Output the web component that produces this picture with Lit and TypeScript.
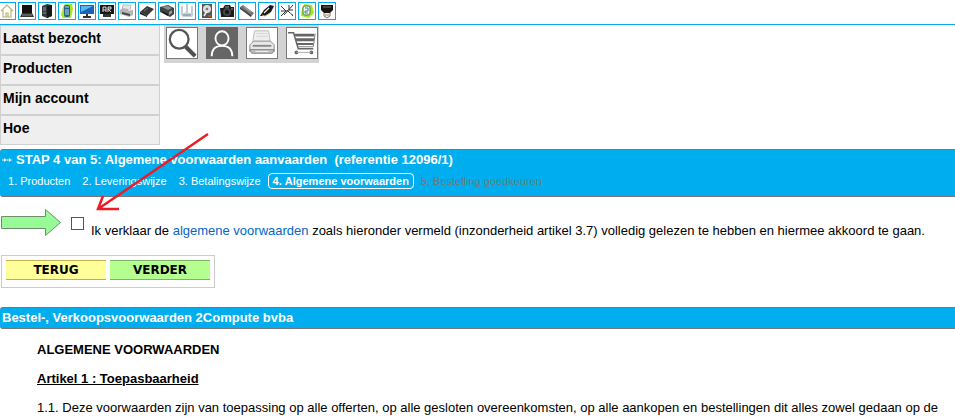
import { LitElement, html, svg, css } from "lit";
import { customElement, state } from "lit/decorators.js";

const categories = [
  { name: "Start", art: svg`<path d="M2 8 8 2l6 6M4 7v7h8V7M7 14v-4h2v4" fill="none" stroke="#b5b673" stroke-width="1.2"/>` },
  { name: "Laptops", art: svg`<path d="M3 2h10v8H3z" fill="#111"/><path d="M3 10h10l2 4H1z" fill="#333"/><path d="M3 12h10" stroke="#888"/>` },
  { name: "Computers", art: svg`<path d="m3 3 5-2 5 1v11l-5 2-5-2z" fill="#34393d"/><path d="m8 3 5-1v11l-5 2z" fill="#151719"/><path d="M4 5h3M4 7h3M4 10h3" stroke="#8d969c"/>` },
  { name: "Telefonie", art: svg`<path d="M6 1h7l1 5-2 9H4L2 12 4 4z" fill="#a6e52a"/><rect x="5" y="2" width="6" height="12" rx="2" fill="#27618b"/><path d="M6 4h4M6 7h4M6 9h4M6 11h4" stroke="#b9ddea"/>` },
  { name: "Monitoren", art: svg`<path d="M1 2h14v9H1z" fill="#1b64b5"/><path d="M2 3h12L2 9z" fill="#57b5f1"/><path d="M7 11h2v2h3v2H4v-2h3z" fill="#333"/>` },
  { name: "Software", art: svg`<path d="M1 2h14v9H1z" fill="#161616"/><path d="M4 9V4h3v5M4 7h3M9 9V4h3v2H9l3 3" stroke="#ddd" fill="none"/><path d="M4 11h8v3H4z" fill="#333"/>` },
  { name: "Printers", art: svg`<path d="M4 2h8l-1 5H3z" fill="#e6e6e6" stroke="#bbb"/><path d="m1 7 3-2 10 2v5l-4 2-9-3z" fill="#b5b5b5"/><path d="m3 9 8 2v2l-8-2z" fill="#444"/><path d="M9 7h4" stroke="#f6f6f6"/>` },
  { name: "Schijven", art: svg`<path d="m1 9 7-6 7 3-7 7z" fill="#383838"/><path d="m1 9 7 4v1L1 11z" fill="#111"/><path d="m5 8 4-3" stroke="#777"/>` },
  { name: "Netwerk", art: svg`<path d="m1 4 8-2 6 3v6l-4 3-10-5z" fill="#3f4442"/><path d="m3 4 6-1 4 2-4 2z" fill="#8b9390"/><path d="m3 8 6 3v2L3 9z" fill="#151515"/><path d="m10 9 3-2v3l-3 2z" fill="#8aa892"/>` },
  { name: "Routers", art: svg`<path d="M3 11V3M8 10V1M13 11V3" stroke="#9ab" stroke-width="1.2"/><path d="m1 11 6-2 8 2-2 3H4z" fill="#c5d2da"/><path d="M4 12h8" stroke="#6e8490"/>` },
  { name: "Harde schijven", art: svg`<path d="M3 1h10v14H3z" fill="#555"/><circle cx="8" cy="6" r="4" fill="#ddd"/><circle cx="8" cy="6" r="1.3" fill="#777"/><path d="m5 13 3-5" stroke="#eee" stroke-width="1.5"/><path d="M9 12h3v2H9z" fill="#a5503b"/>` },
  { name: "Camera's", art: svg`<path d="M1 5h3l2-3h5l1 2h3v10H2z" fill="#1b1b1b"/><circle cx="8" cy="9" r="4" fill="#444"/><circle cx="8" cy="9" r="2" fill="#111"/><path d="M6 4h4M12 6h2" stroke="#999"/>` },
  { name: "Geheugen", art: svg`<path d="m1 4 3-2 11 8-3 4z" fill="#777"/><path d="m1 4 11 8v2L1 6z" fill="#444"/><path d="m5 4 7 5" stroke="#aaa"/>` },
  { name: "Accessoires", art: svg`<path d="m1 13 4-6 6-5 4 1-3 6-6 4z" fill="#171717"/><path d="m5 10 5-5" stroke="#eee" stroke-width="1.3"/><path d="m3 12 3 1 5-3" stroke="#d1a43e" fill="none"/>` },
  { name: "Kabels", art: svg`<path d="m2 3 5 5-5 5M14 2 5 12M8 7l6 6M10 2v5h4M2 8h6" stroke="#333" fill="none"/><path d="m11 10 3 2" stroke="#888"/>` },
  { name: "Beveiliging", art: svg`<path d="m5 1 8 1 2 8-5 5-8-2 1-8z" fill="#a4e52f"/><rect x="4" y="3" width="7" height="9" rx="2" fill="#eef5e9" stroke="#547d4b"/><path d="M6 5h3v3H6v2h3" stroke="#4184a1" fill="none"/>` },
  { name: "Stekkers", art: svg`<path d="M2 2h12v5l-3 3H5L2 7z" fill="#151515"/><path d="M4 4h8" stroke="#777"/><path d="M5 10v3l3 2 3-2v-3" fill="#eee" stroke="#777"/><path d="M6 12h4" stroke="#c48045"/>` },
];

const tools = [
  { name: "Zoeken", kind: "", art: svg`<circle cx="13" cy="12" r="10" fill="#fff" stroke="#555" stroke-width="2.4"/><path d="m20 20 10 10" stroke="#505050" stroke-width="4.5"/>` },
  { name: "Mijn profiel", kind: "dark", art: svg`<ellipse cx="16" cy="11" rx="7" ry="7.5" fill="none" stroke="#fff" stroke-width="2"/><path d="M5 30c0-7 4-11 11-11s11 4 11 11" fill="none" stroke="#fff" stroke-width="2"/>` },
  { name: "Afdrukken", kind: "", art: svg`<path d="M8 3h15l2 13H6z" fill="#eee" stroke="#bbb"/><path d="M10 6h12M10 9h12" stroke="#d5d5d5"/><path d="M7 14h18l4 4v7H3v-7z" fill="#e7e7e7" stroke="#888"/><path d="M6 18h20v2H6z" fill="#888"/><path d="M3 23h26l-2 4H5z" fill="#bbb" stroke="#888"/><path d="M9 25h14" stroke="#f4f4f4"/>` },
  { name: "Winkelwagen", kind: "", art: svg`<path d="M1 5h6l5 17h16" fill="none" stroke="#666" stroke-width="1.6"/><path d="M8 6h21v3H9zM9 11h20v3H10zM10 16h18v2H11z" fill="#666"/><path d="M12 20h16l2-14" fill="none" stroke="#777"/><circle cx="10" cy="26" r="2" fill="#666"/><circle cx="26" cy="26" r="2" fill="#666"/><path d="M10 26h16" stroke="#aaa"/>` },
];

const menu = ["Laatst bezocht", "Producten", "Mijn account", "Hoe"];

const steps = ["Producten", "Leveringswijze", "Betalingswijze", "Algemene voorwaarden", "Bestelling goedkeuren"];

@customElement("app-root")
export class AppRoot extends LitElement {
  @state() private accepted = false;

  static styles = css`
    :host {
      display: block;
      position: relative;
      overflow: hidden;
      background: #fff;
      color: #000;
      font: 13px/18px "Liberation Sans", Arial, sans-serif;
    }
    * { box-sizing: border-box; }
    a { text-decoration: none; }
    svg { display: block; }
    .categories {
      display: flex;
      gap: 2px;
      height: 25px;
      padding-top: 2px;
      margin-left: -2px;
      border-bottom: 1px solid #00aeef;
    }
    .category {
      width: 18px;
      height: 18px;
      border: 1px solid #00aeef;
    }
    .category svg { width: 16px; height: 16px; }
    .top { display: flex; align-items: flex-start; gap: 4px; }
    .menu { width: 160px; }
    .menu a {
      display: block;
      height: 30px;
      padding: 2px;
      border: 1px solid #d0d0d0;
      background: #efefef;
      color: #000;
      font-size: 14px;
      font-weight: bold;
      line-height: 20px;
    }
    .tools {
      display: flex;
      gap: 8px;
      padding: 2px 1px 4px 2px;
      background: #d3d3d3;
    }
    .tool {
      width: 32px;
      height: 32px;
      padding: 0;
      border: 1px solid #777;
      background: #fff;
    }
    .tool svg { width: 30px; height: 30px; }
    .dark { background: #666; border-color: #666; }
    .banner {
      border: solid #777;
      border-width: 1px 0;
      border-radius: 3px 0 0 3px;
      background: #00aeef;
      color: #fff;
    }
    .progress { height: 48px; margin-top: 4px; }
    h1, h2 { margin: 0; font-size: 13px; line-height: 20px; font-weight: bold; white-space: pre; }
    h1 { display: flex; gap: 4px; padding-left: 2px; }
    h2 { padding-left: 2px; }
    .marks { width: 10px; height: 20px; }
    .steps {
      display: flex;
      gap: 2px;
      margin: 3px 0 0;
      padding: 0 0 0 3px;
      list-style: none;
      font-size: 11px;
      line-height: 14px;
      white-space: nowrap;
    }
    .steps li { display: flex; gap: 3px; padding: 0 4px; border: 1px solid transparent; }
    .steps .current { border-color: #fff; border-radius: 4px; font-weight: bold; }
    .steps .later { color: #777; }
    .accept { display: flex; align-items: flex-start; margin-top: 10px; height: 48px; white-space: nowrap; }
    .pointer { width: 62px; height: 30px; flex: none; }
    .accept input {
      appearance: none;
      flex: none;
      width: 13px;
      height: 13px;
      margin: 10px 7px 0 9px;
      border: 1px solid #555;
      background: #fff;
    }
    .accept input:checked { background: #00aeef; }
    .accept label { margin-top: 15px; }
    .accept a { color: #06c; }
    .actions {
      display: flex;
      gap: 4px;
      width: max-content;
      height: 33px;
      margin: 0 0 19px 1px;
      padding: 4px;
      border: 1px solid #ccc;
    }
    .actions button {
      width: 100px;
      height: 20px;
      padding: 0;
      border: solid #c4ad4e;
      border-width: 1px 0;
      background: #ff9;
      color: #000;
      font: bold 12px/18px "DejaVu Sans", Verdana, sans-serif;
    }
    .actions .next { background: #b5ff91; border-color: #7fb365; }
    .terms { padding: 12px 0 0 37px; white-space: nowrap; }
    .terms h3, .terms h4, .terms p { margin: 0 0 11px; font-size: 13px; line-height: 18px; }
    .terms h4 { text-decoration: underline; }
    .terms p { margin: 0; }
    .callout {
      position: absolute;
      left: 90px;
      top: 130px;
      width: 124px;
      height: 84px;
      pointer-events: none;
    }
  `;

  private toggle(event: Event) {
    this.accepted = (event.target as HTMLInputElement).checked;
  }

  render() {
    return html`
      <nav class="categories" aria-label="Categorieën">
        ${categories.map((c) => html`<a class="category" href="#" aria-label=${c.name}><svg viewBox="0 0 16 16">${c.art}</svg></a>`)}
      </nav>
      <div class="top">
        <nav class="menu" aria-label="Menu">${menu.map((item) => html`<a href="#">${item}</a>`)}</nav>
        <div class="tools">
          ${tools.map((t) => html`<button class="tool ${t.kind}" aria-label=${t.name}><svg viewBox="0 0 32 32">${t.art}</svg></button>`)}
        </div>
      </div>
      <header class="banner progress">
        <h1><svg class="marks" viewBox="0 0 10 20"><path d="M0 10h3M5 10h3" stroke="#fff"/><path d="m2 8 3 2-3 2zM7 8l3 2-3 2z" fill="#fff"/></svg><span>STAP 4 van 5: Algemene voorwaarden aanvaarden  (referentie 12096/1)</span></h1>
        <ol class="steps">
          ${steps.map((s, i) => html`<li class=${i === 3 ? "current" : i > 3 ? "later" : ""}><span>${i + 1}.</span><span>${s}</span></li>`)}
        </ol>
      </header>
      <div class="accept">
        <svg class="pointer" viewBox="0 0 62 30"><path d="M1.500 9.500h44v-7l15 13-15 13v-7h-44z" fill="#98fb98" stroke="#6d8f6d"/></svg>
        <input id="accept" type="checkbox" .checked=${this.accepted} @change=${this.toggle} />
        <label for="accept">Ik verklaar de <a href="#terms">algemene voorwaarden</a> zoals hieronder vermeld (inzonderheid artikel 3.7) volledig gelezen te hebben en hiermee akkoord te gaan.</label>
      </div>
      <div class="actions">
        <button>TERUG</button>
        <button class="next">VERDER</button>
      </div>
      <h2 class="banner">Bestel-, Verkoopsvoorwaarden 2Compute bvba</h2>
      <section class="terms" id="terms">
        <h3>ALGEMENE VOORWAARDEN</h3>
        <h4>Artikel 1 : Toepasbaarheid</h4>
        <p>1.1. Deze voorwaarden zijn van toepassing op alle offerten, op alle gesloten overeenkomsten, op alle aankopen en bestellingen dit alles zowel gedaan op de</p>
      </section>
      <svg class="callout" viewBox="0 0 124 84" aria-hidden="true">
        <path d="M118 4 8 79M13 66 8 79h21" fill="none" stroke="#ed1c24" stroke-width="2.5"/>
      </svg>
    `;
  }
}
